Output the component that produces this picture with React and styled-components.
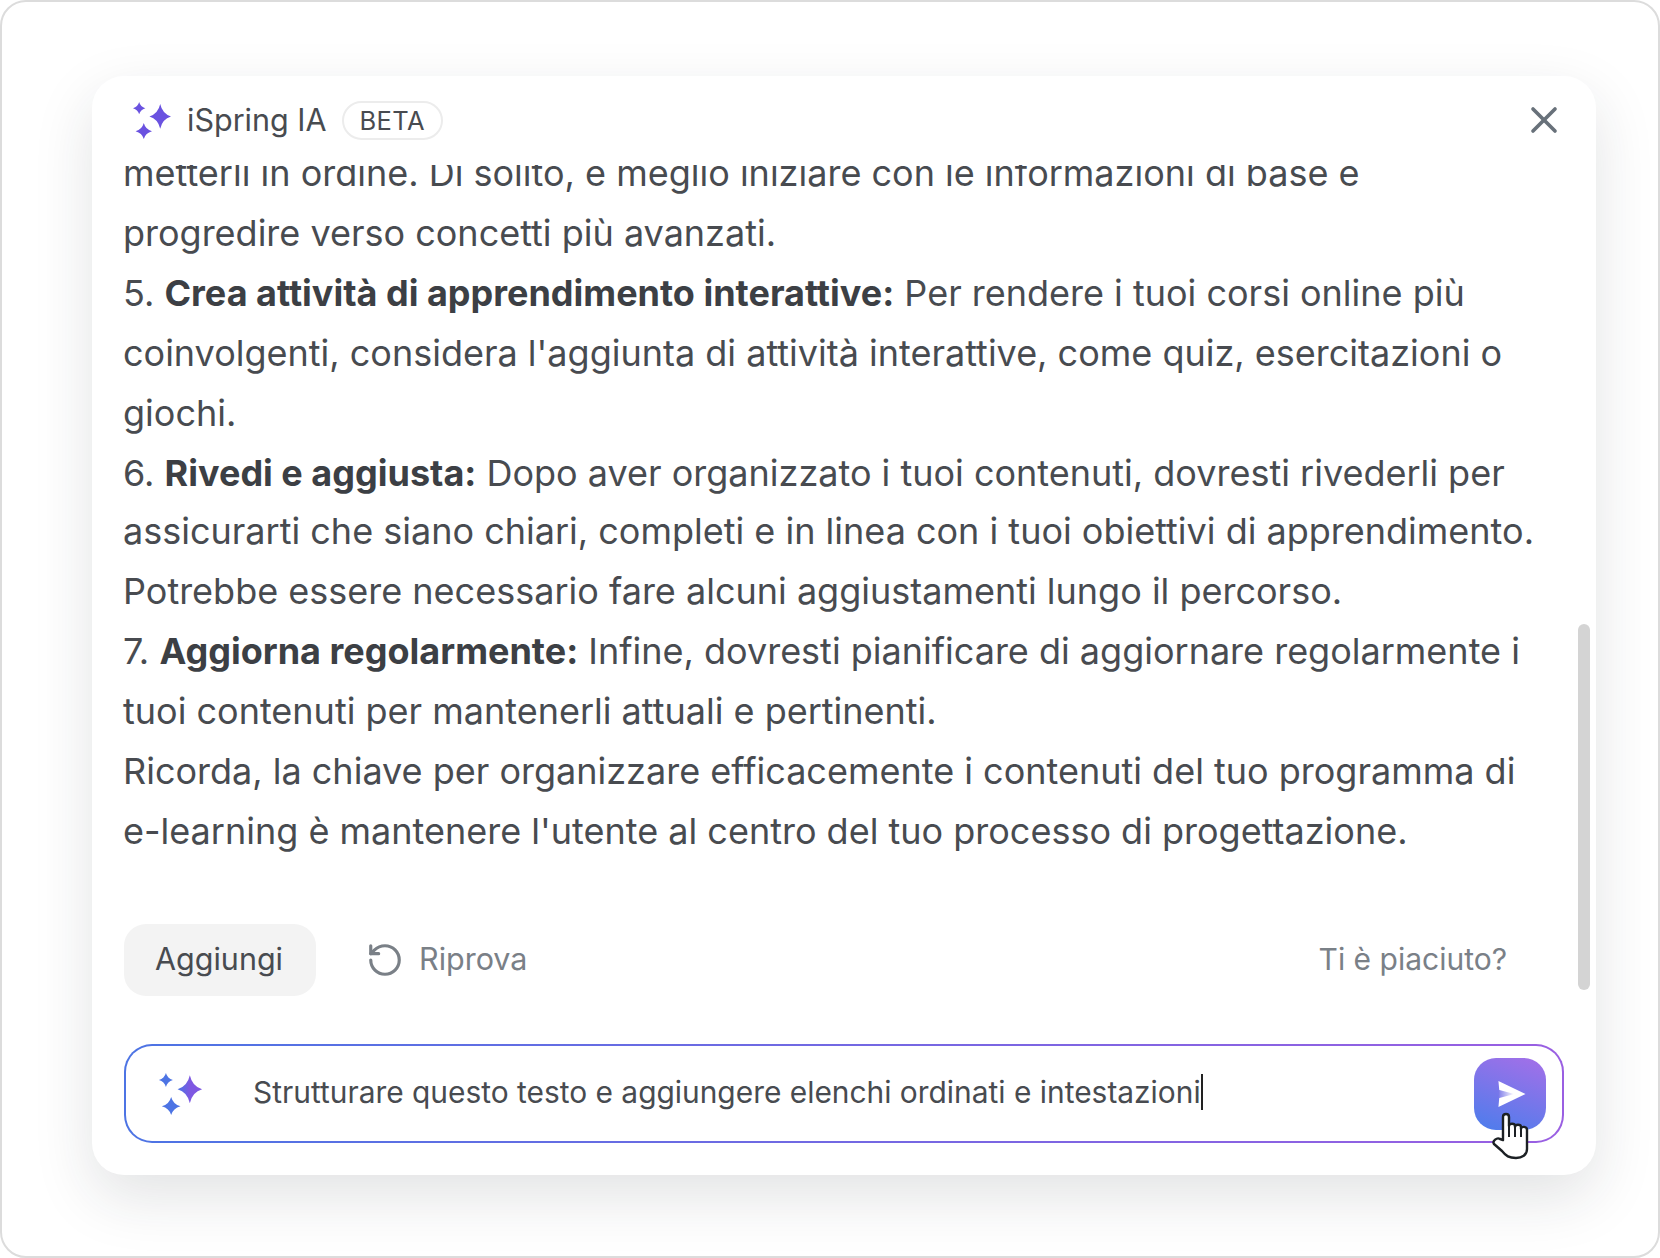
import React from 'react'
import styled, { createGlobalStyle } from 'styled-components'
import { RotateCcw, X } from 'lucide-react'

const GlobalStyle = createGlobalStyle`
  html, body {
    margin: 0;
    padding: 0;
    background: #ffffff;
  }
  * {
    box-sizing: border-box;
  }
`

const Frame = styled.div`
  width: 1660px;
  height: 1258px;
  padding: 74px 62px 81px 90px;
  background: #ffffff;
  border: 2px solid #dcdcdc;
  border-radius: 26px;
  font-family: Inter, "Liberation Sans", sans-serif;
  overflow: hidden;
`

const Card = styled.div`
  position: relative;
  height: 1099px;
  display: flex;
  flex-direction: column;
  background: #ffffff;
  border-radius: 32px;
  box-shadow: 0 22px 60px rgba(30, 35, 45, 0.13);
`

const Header = styled.div`
  height: 89px;
  flex: none;
  display: flex;
  align-items: center;
  padding: 0 30px 1px 41px;
`

const Title = styled.span`
  margin-left: 16px;
  padding-bottom: 2px;
  font-size: 30.5px;
  color: #484b50;
`

const Badge = styled.span`
  margin-left: 15px;
  height: 39px;
  padding: 0 16px;
  display: flex;
  align-items: center;
  border: 2px solid #ececec;
  border-radius: 20px;
  font-size: 25.5px;
  letter-spacing: 0.4px;
  color: #484b50;
`

const CloseButton = styled.button`
  margin-left: auto;
  padding: 0;
  display: flex;
  border: 0;
  background: none;
  color: #68717a;
`

const Viewport = styled.div`
  height: 715px;
  flex: none;
  overflow: hidden;
  padding: 0 31px;
`

const Messages = styled.div`
  margin-top: -22px;
  font-size: 36px;
  line-height: 60px;
  color: #484b50;

  b {
    font-weight: 700;
    color: #3c3f44;
  }
`

const Paragraph = styled.div`
  margin-top: ${({ $overlap }) => ($overlap ? '-2px' : '0')};
`

const ScrollThumb = styled.div`
  position: absolute;
  top: 548px;
  right: 6px;
  width: 12px;
  height: 366px;
  border-radius: 6px;
  background: #d4d4d4;
`

const Actions = styled.div`
  margin-top: 44px;
  height: 72px;
  flex: none;
  display: flex;
  align-items: center;
  padding: 0 89px 0 32px;
`

const AddButton = styled.button`
  width: 192px;
  height: 72px;
  padding: 0 2px 4px 0;
  border: 0;
  border-radius: 22px;
  background: #f3f3f3;
  font-family: inherit;
  font-size: 30.5px;
  color: #484b50;
`

const RetryButton = styled.button`
  margin-left: 50px;
  padding: 0;
  display: flex;
  align-items: center;
  gap: 15px;
  border: 0;
  background: none;
  font-family: inherit;
  font-size: 30.5px;
  color: #7a8087;
`

const RetryLabel = styled.span`
  margin-bottom: 4px;
`

const Feedback = styled.span`
  margin-left: auto;
  padding-bottom: 2px;
  font-size: 30px;
  color: #7a8087;
`

const InputBox = styled.div`
  position: relative;
  margin: 48px 32px 0;
  height: 99px;
  flex: none;
  display: flex;
  align-items: center;
  padding: 0 16px 0 31px;
  border: 2px solid transparent;
  border-radius: 28px;
  background:
    linear-gradient(#ffffff, #ffffff) padding-box,
    linear-gradient(90deg, #4d74e4, #7a66e2 60%, #9a5fe2) border-box;
`

const InputText = styled.span`
  margin-left: 49px;
  margin-bottom: 4px;
  font-size: 29.9px;
  color: #484b50;
  border-right: 2px solid #222222;
  line-height: 36px;
`

const SendButton = styled.button`
  margin-left: auto;
  width: 72px;
  height: 72px;
  padding: 0 0 0 2px;
  display: flex;
  align-items: center;
  justify-content: center;
  border: 0;
  border-radius: 22px;
  background: linear-gradient(200deg, #a56fe8, #4b7dec);
`

const Cursor = styled.svg`
  position: absolute;
  right: 30px;
  bottom: -21px;
`

const Sparkles = ({ id, from, to, width, height }) => (
  <svg width={width} height={height} viewBox="0 0 37 36">
    <defs>
      <linearGradient id={id} x1="0" y1="0" x2="1" y2="0">
        <stop offset="0.45" stopColor={from} />
        <stop offset="0.72" stopColor={to} />
      </linearGradient>
    </defs>
    <path
      fill={`url(#${id})`}
      d="M6 0 Q7.3 4.7 12 6 Q7.3 7.3 6 12 Q4.7 7.3 0 6 Q4.7 4.7 6 0 Z
         M26.5 2 Q28.6 11.6 37 14 Q28.6 16.4 26.5 26 Q24.4 16.4 16 14 Q24.4 11.6 26.5 2 Z
         M10.5 20.5 Q12.2 26.8 18.5 28.5 Q12.2 30.2 10.5 36 Q8.8 30.2 2.5 28.5 Q8.8 26.8 10.5 20.5 Z"
    />
  </svg>
)

const App = () => {
  return (
    <>
      <GlobalStyle />
      <Frame>
        <Card>
          <Header>
            <Sparkles id="head-spark" from="#6a52e0" to="#6a52e0" width={38} height={37} />
            <Title>iSpring IA</Title>
            <Badge>BETA</Badge>
            <CloseButton>
              <X size={44} strokeWidth={2} />
            </CloseButton>
          </Header>
          <Viewport>
            <Messages>
              <Paragraph>
                metterli in ordine. Di solito, è meglio iniziare con le informazioni di base e<br />
                progredire verso concetti più avanzati.<br />
                5. <b>Crea attività di apprendimento interattive:</b> Per rendere i tuoi corsi online più<br />
                coinvolgenti, considera l'aggiunta di attività interattive, come quiz, esercitazioni o<br />
                giochi.<br />
                6. <b>Rivedi e aggiusta:</b> Dopo aver organizzato i tuoi contenuti, dovresti rivederli per
              </Paragraph>
              <Paragraph $overlap>
                assicurarti che siano chiari, completi e in linea con i tuoi obiettivi di apprendimento.<br />
                Potrebbe essere necessario fare alcuni aggiustamenti lungo il percorso.<br />
                7. <b>Aggiorna regolarmente:</b> Infine, dovresti pianificare di aggiornare regolarmente i<br />
                tuoi contenuti per mantenerli attuali e pertinenti.<br />
                Ricorda, la chiave per organizzare efficacemente i contenuti del tuo programma di<br />
                e-learning è mantenere l'utente al centro del tuo processo di progettazione.
              </Paragraph>
            </Messages>
          </Viewport>
          <ScrollThumb />
          <Actions>
            <AddButton>Aggiungi</AddButton>
            <RetryButton>
              <RotateCcw size={38} strokeWidth={2} />
              <RetryLabel>Riprova</RetryLabel>
            </RetryButton>
            <Feedback>Ti è piaciuto?</Feedback>
          </Actions>
          <InputBox>
            <Sparkles id="input-spark" from="#4d74e4" to="#7f58e2" width={47} height={42} />
            <InputText>Strutturare questo testo e aggiungere elenchi ordinati e intestazioni</InputText>
            <SendButton>
              <svg width="29" height="28" viewBox="0 0 30 30">
                <defs>
                  <linearGradient id="plane" x1="0" y1="0" x2="1" y2="0">
                    <stop offset="0" stopColor="#7a78e8" stopOpacity="0.95" />
                    <stop offset="1" stopColor="#7a78e8" stopOpacity="0" />
                  </linearGradient>
                </defs>
                <path fill="#ffffff" d="M1 1 L30 15 L1 29 L2 18 L2 12 Z" />
                <path fill="url(#plane)" d="M1 10.5 L18 15 L1 19.5 Z" />
              </svg>
            </SendButton>
            <Cursor width="40" height="50" viewBox="0 0 40 50">
              <path
                fill="#ffffff"
                stroke="#1c2024"
                strokeWidth="2.4"
                strokeLinejoin="round"
                d="M11 28 L11 5 C11 1 17 1 17 5 L17 14 C17 11 23 11 23 14 L23 15 C23 12 29 12 29 15 L29 17 C29 14 35 14 35 18 L35 37 C35 43 30 46 24 46 C17 46 14 44 10 39 L2 32 C0 29 5 25 8 27 Z"
              />
              <path stroke="#1c2024" strokeWidth="2" d="M17 14 L17 25 M23 15 L23 25 M29 17 L29 25" />
            </Cursor>
          </InputBox>
        </Card>
      </Frame>
    </>
  )
}

export default App
